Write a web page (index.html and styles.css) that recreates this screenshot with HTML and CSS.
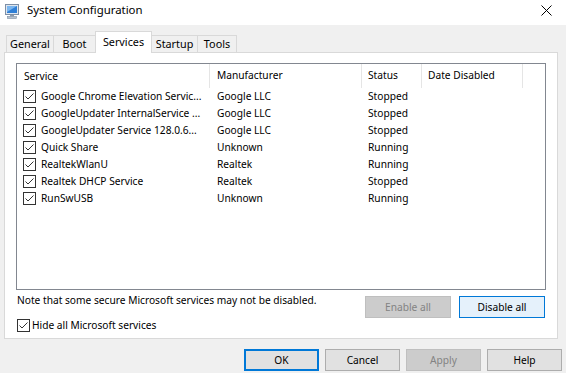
FILE: index.html
```html
<!DOCTYPE html>
<html>
<head>
<meta charset="utf-8">
<link rel="stylesheet" href="styles.css">
</head>
<body>
<div class="titlebar">
	<svg class="app-icon" width="16" height="16" viewBox="0 0 16 16">
		<rect x="1.5" y="1.5" width="13" height="10" fill="#dfe6ee" stroke="#7d8fa6"/>
		<rect x="3" y="3" width="10" height="7" fill="#2f7fd6"/>
		<path d="M3 3 L13 3 L3 9 Z" fill="#7bb6ef"/>
		<rect x="6" y="12" width="4" height="1.5" fill="#8d9aab"/>
		<rect x="3.5" y="13.5" width="9" height="2" fill="#b7c1cd" stroke="#7d8fa6" stroke-width="0.6"/>
	</svg>
	<span class="title">System Configuration</span>
	<svg class="close" width="11" height="11" viewBox="0 0 11 11">
		<path d="M0.5 0.5 L10.5 10.5 M10.5 0.5 L0.5 10.5" stroke="#000" stroke-width="1"/>
	</svg>
</div>

<div class="tabs">
	<div class="tab tab-general">General</div>
	<div class="tab tab-boot">Boot</div>
	<div class="tab tab-services selected">Services</div>
	<div class="tab tab-startup">Startup</div>
	<div class="tab tab-tools">Tools</div>
</div>

<div class="panel">
	<div class="list">
		<div class="row header">
			<div class="cell first">Service</div>
			<div class="cell">Manufacturer</div>
			<div class="cell status">Status</div>
			<div class="cell status">Date Disabled</div>
		</div>
		<div class="row">
			<div class="cell first"><svg class="check" width="13" height="13" viewBox="0 0 13 13"><rect x="0.5" y="0.5" width="12" height="12" fill="#fff" stroke="#333"/><path d="M2.5 6.5 L5 9 L10.5 3.5" fill="none" stroke="#333"/></svg>Google Chrome Elevation Servic...</div>
			<div class="cell">Google LLC</div>
			<div class="cell status">Stopped</div>
			<div class="cell status"></div>
		</div>
		<div class="row">
			<div class="cell first"><svg class="check" width="13" height="13" viewBox="0 0 13 13"><rect x="0.5" y="0.5" width="12" height="12" fill="#fff" stroke="#333"/><path d="M2.5 6.5 L5 9 L10.5 3.5" fill="none" stroke="#333"/></svg>GoogleUpdater InternalService ...</div>
			<div class="cell">Google LLC</div>
			<div class="cell status">Stopped</div>
			<div class="cell status"></div>
		</div>
		<div class="row">
			<div class="cell first"><svg class="check" width="13" height="13" viewBox="0 0 13 13"><rect x="0.5" y="0.5" width="12" height="12" fill="#fff" stroke="#333"/><path d="M2.5 6.5 L5 9 L10.5 3.5" fill="none" stroke="#333"/></svg>GoogleUpdater Service 128.0.6...</div>
			<div class="cell">Google LLC</div>
			<div class="cell status">Stopped</div>
			<div class="cell status"></div>
		</div>
		<div class="row">
			<div class="cell first"><svg class="check" width="13" height="13" viewBox="0 0 13 13"><rect x="0.5" y="0.5" width="12" height="12" fill="#fff" stroke="#333"/><path d="M2.5 6.5 L5 9 L10.5 3.5" fill="none" stroke="#333"/></svg>Quick Share</div>
			<div class="cell">Unknown</div>
			<div class="cell status">Running</div>
			<div class="cell status"></div>
		</div>
		<div class="row">
			<div class="cell first"><svg class="check" width="13" height="13" viewBox="0 0 13 13"><rect x="0.5" y="0.5" width="12" height="12" fill="#fff" stroke="#333"/><path d="M2.5 6.5 L5 9 L10.5 3.5" fill="none" stroke="#333"/></svg>RealtekWlanU</div>
			<div class="cell">Realtek</div>
			<div class="cell status">Running</div>
			<div class="cell status"></div>
		</div>
		<div class="row">
			<div class="cell first"><svg class="check" width="13" height="13" viewBox="0 0 13 13"><rect x="0.5" y="0.5" width="12" height="12" fill="#fff" stroke="#333"/><path d="M2.5 6.5 L5 9 L10.5 3.5" fill="none" stroke="#333"/></svg>Realtek DHCP Service</div>
			<div class="cell">Realtek</div>
			<div class="cell status">Stopped</div>
			<div class="cell status"></div>
		</div>
		<div class="row">
			<div class="cell first"><svg class="check" width="13" height="13" viewBox="0 0 13 13"><rect x="0.5" y="0.5" width="12" height="12" fill="#fff" stroke="#333"/><path d="M2.5 6.5 L5 9 L10.5 3.5" fill="none" stroke="#333"/></svg>RunSwUSB</div>
			<div class="cell">Unknown</div>
			<div class="cell status">Running</div>
			<div class="cell status"></div>
		</div>
	</div>

	<div class="note-row">
		<span class="note">Note that some secure Microsoft services may not be disabled.</span>
		<button class="btn wide disabled">Enable all</button>
		<button class="btn wide hot">Disable all</button>
	</div>

	<label class="hide-ms"><svg class="check" width="13" height="13" viewBox="0 0 13 13"><rect x="0.5" y="0.5" width="12" height="12" fill="#fff" stroke="#333"/><path d="M2.5 6.5 L5 9 L10.5 3.5" fill="none" stroke="#333"/></svg>Hide all Microsoft services</label>
</div>

<div class="footer">
	<button class="btn default">OK</button>
	<button class="btn">Cancel</button>
	<button class="btn disabled">Apply</button>
	<button class="btn">Help</button>
</div>
</body>
</html>
```

FILE: styles.css
```css
body
{
	margin: 0;
	width: 566px;
	height: 373px;
	overflow: hidden;
	background: #f0f0f0;
	color: #000;
	font-family: "Noto Sans", sans-serif;
	font-size: 10.2px;
}

.titlebar
{
	height: 25px;
	background: #fff;
	display: flex;
	align-items: flex-start;
	box-sizing: border-box;
	padding-top: 2px;
	line-height: 16px;
}
.app-icon
{
	margin: 1px 7px 0 4px;
}
.title
{
	flex: 1;
	font-size: 11.4px;
}
.close
{
	margin: 3px 14px 0 0;
}

.tabs
{
	display: flex;
	align-items: flex-end;
	height: 28px;
	padding-left: 6px;
	margin-bottom: -1px;
}
.tab
{
	box-sizing: border-box;
	height: 17px;
	margin: 0 -1px 1px 0;
	border: 1px solid #d9d9d9;
	border-bottom: 0;
	background: #f0f0f0;
	text-align: center;
	line-height: 16px;
	font-size: 10.8px;
}
.tab.selected
{
	position: relative;
	height: 22px;
	margin-bottom: 0;
	padding-top: 2px;
	background: #fff;
}
.tab-general { width: 48px; }
.tab-boot { width: 43px; }
.tab-services { width: 57px; }
.tab-startup { width: 47px; }
.tab-tools { width: 40px; }

.panel
{
	margin-left: 4px;
	width: 554px;
	height: 287px;
	box-sizing: border-box;
	border: 1px solid #d9d9d9;
	background: #fff;
	padding: 10px 12px 0 11px;
}

.list
{
	width: 530px;
	height: 227px;
	box-sizing: border-box;
	border: 1px solid #828790;
}
.row
{
	display: grid;
	grid-template-columns: 193px 152px 60px 101px;
	height: 17px;
	line-height: 17px;
	white-space: nowrap;
}
.row.header
{
	height: 24px;
	line-height: 22px;
}
.cell
{
	padding-left: 7px;
	overflow: hidden;
}
.cell.status
{
	padding-left: 6px;
}
.cell.first
{
	display: flex;
	align-items: center;
	padding-left: 6px;
}
.header .cell
{
	border-right: 1px solid #e5e5e5;
}
.header .cell.first
{
	padding-left: 7px;
}
.check
{
	flex: none;
	margin-right: 5px;
}

.note-row
{
	display: flex;
	align-items: flex-start;
	gap: 8px;
	margin-top: 2px;
}
.note
{
	flex: 1;
	line-height: 16px;
	margin-left: 1px;
}
.note-row .btn
{
	margin-top: 4px;
}

.hide-ms
{
	display: flex;
	align-items: center;
	margin-left: 1px;
	line-height: 14px;
}
.hide-ms .check
{
	margin-right: 2px;
}

.btn
{
	box-sizing: border-box;
	width: 75px;
	height: 22px;
	padding: 0;
	border: 1px solid #adadad;
	background: #e1e1e1;
	color: #000;
	font-family: "Noto Sans", sans-serif;
	font-size: 10.2px;
}
.btn.wide
{
	width: 86px;
}
.btn.disabled
{
	background: #cccccc;
	border-color: #bfbfbf;
	color: #838383;
}
.btn.hot
{
	background: #e5f1fb;
	border-color: #0078d7;
}
.btn.default
{
	border: 2px solid #0078d7;
}

.footer
{
	display: flex;
	justify-content: flex-end;
	gap: 6px;
	margin-top: 10px;
	padding-right: 4px;
}
```
